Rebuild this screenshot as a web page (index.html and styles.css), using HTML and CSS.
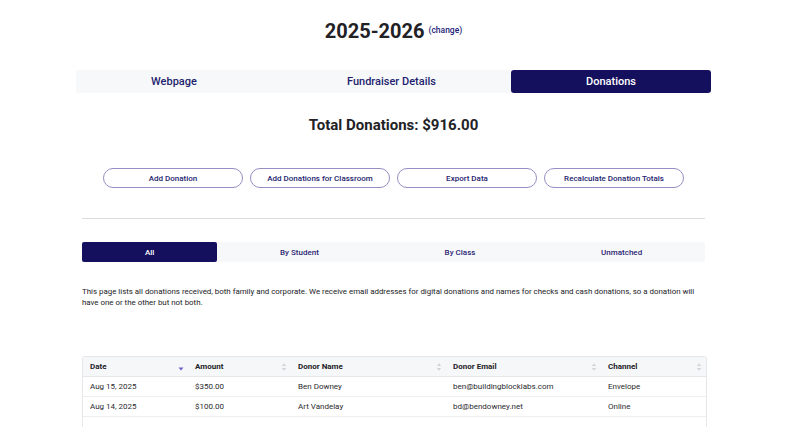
FILE: index.html
```html
<!DOCTYPE html>
<html>
<head>
<meta charset="utf-8">
<link rel="stylesheet" href="styles.css">
</head>
<body>
<div class="page">
  <div class="title-row">
    <h1 class="title">2025-2026</h1>
    <a class="change">(change)</a>
  </div>
  <nav class="tabs">
    <div class="tab">Webpage</div>
    <div class="tab">Fundraiser Details</div>
    <div class="tab active">Donations</div>
  </nav>
  <h2 class="total">Total Donations: $916.00</h2>
  <div class="actions">
    <button class="pill">Add Donation</button>
    <button class="pill">Add Donations for Classroom</button>
    <button class="pill">Export Data</button>
    <button class="pill">Recalculate Donation Totals</button>
  </div>
  <hr class="divider">
  <nav class="subtabs">
    <div class="subtab active">All</div>
    <div class="subtab">By Student</div>
    <div class="subtab">By Class</div>
    <div class="subtab">Unmatched</div>
  </nav>
  <p class="note">This page lists all donations received, both family and corporate. We receive email addresses for digital donations and names for checks and cash donations, so a donation will have one or the other but not both.</p>
  <table class="grid">
    <colgroup>
      <col class="c1"><col class="c2"><col class="c3"><col class="c4"><col class="c5">
    </colgroup>
    <thead>
      <tr>
        <th><span>Date</span><svg class="sort" viewBox="0 0 6 10"><path d="M0.5 5.5 L5.5 5.5 L3 8.5 Z" fill="#6b62c8"/></svg></th>
        <th><span>Amount</span><svg class="sort" viewBox="0 0 6 10"><path d="M0.8 4 L5.2 4 L3 1.2 Z M0.8 6 L5.2 6 L3 8.8 Z" fill="#d4d4d8"/></svg></th>
        <th><span>Donor Name</span><svg class="sort" viewBox="0 0 6 10"><path d="M0.8 4 L5.2 4 L3 1.2 Z M0.8 6 L5.2 6 L3 8.8 Z" fill="#d4d4d8"/></svg></th>
        <th><span>Donor Email</span><svg class="sort" viewBox="0 0 6 10"><path d="M0.8 4 L5.2 4 L3 1.2 Z M0.8 6 L5.2 6 L3 8.8 Z" fill="#d4d4d8"/></svg></th>
        <th><span>Channel</span><svg class="sort" viewBox="0 0 6 10"><path d="M0.8 4 L5.2 4 L3 1.2 Z M0.8 6 L5.2 6 L3 8.8 Z" fill="#d4d4d8"/></svg></th>
      </tr>
    </thead>
    <tbody>
      <tr><td>Aug 15, 2025</td><td>$350.00</td><td>Ben Downey</td><td>ben@buildingblocklabs.com</td><td>Envelope</td></tr>
      <tr><td>Aug 14, 2025</td><td>$100.00</td><td>Art Vandelay</td><td>bd@bendowney.net</td><td>Online</td></tr>
      <tr class="cut"><td></td><td></td><td></td><td></td><td></td></tr>
    </tbody>
  </table>
</div>
</body>
</html>
```
FILE: styles.css
```css
html, body {
  margin: 0;
  padding: 0;
  background: #ffffff;
  height: 433px;
  overflow: hidden;
}
body {
  font-family: Roboto, "Liberation Sans", Arial, sans-serif;
  color: #222226;
}
.page {
  width: 623px;
  margin-left: 82px;
  padding-top: 18px;
}
.title-row {
  display: flex;
  justify-content: center;
  align-items: flex-start;
  gap: 4px;
  height: 28px;
}
.title {
  margin: 0;
  font-size: 20px;
  line-height: 26px;
  font-weight: 700;
  color: #222226;
}
.change {
  font-size: 8.5px;
  font-weight: 500;
  color: #241e78;
  margin-top: 7px;
}
.tabs {
  display: flex;
  margin: 24px -6px 0;
  background: #f7f8fa;
  height: 23px;
  border-radius: 3px;
}
.tab {
  flex: 1 1 auto;
  display: flex;
  align-items: center;
  justify-content: center;
  font-size: 11px;
  font-weight: 500;
  color: #231f6e;
}
.tab.active {
  background: #15105e;
  color: #ffffff;
  border-radius: 3px;
}
.total {
  margin: 23px 0 0;
  text-align: center;
  font-size: 15px;
  line-height: 18px;
  font-weight: 700;
  color: #222226;
}
.actions {
  display: flex;
  justify-content: center;
  gap: 7px;
  margin-top: 34px;
}
.pill {
  width: 140px;
  height: 20px;
  padding: 0;
  border: 1px solid #948fc4;
  border-radius: 10px;
  background: #ffffff;
  font-family: Roboto, sans-serif;
  font-size: 8px;
  font-weight: 500;
  color: #241e6e;
}
.divider {
  margin: 30px 0 0;
  border: 0;
  border-top: 1px solid #dcdce0;
  height: 0;
}
.subtabs {
  display: flex;
  margin-top: 23px;
  height: 20px;
  background: #f7f8fa;
  border-radius: 2px;
}
.subtab {
  flex: 1 1 auto;
  display: flex;
  align-items: center;
  justify-content: center;
  font-family: Roboto, sans-serif;
  font-size: 8px;
  font-weight: 500;
  color: #2a2672;
}
.subtab.active {
  background: #15105e;
  color: #ffffff;
  border-radius: 2px;
}
.note {
  margin: 24px 0 0;
  font-size: 7.9px;
  line-height: 11px;
  color: #222226;
}
.grid {
  margin-top: 48px;
  width: 623px;
  border-collapse: separate;
  border-spacing: 0;
  border: 1px solid #e6e7ea;
  border-bottom: 0;
  border-radius: 3px 3px 0 0;
  table-layout: fixed;
  font-size: 8px;
}
.c1 { width: 105px; }
.c2 { width: 103px; }
.c3 { width: 155px; }
.c4 { width: 155px; }
.c5 { width: 105px; }
.grid th {
  background: #f6f7f9;
  height: 19px;
  padding: 0 7px;
  text-align: left;
  font-weight: 700;
  color: #222226;
  border-bottom: 1px solid #e6e7ea;
  position: relative;
}
.grid th span {
  vertical-align: middle;
}
.sort {
  position: absolute;
  right: 4px;
  top: 5px;
  width: 6px;
  height: 10px;
}
.grid td {
  height: 19px;
  padding: 0 7px;
  color: #2a2a2e;
  border-bottom: 1px solid #eeeef0;
}
.grid tr.cut td {
  height: 10px;
  border-bottom: 0;
}
```
